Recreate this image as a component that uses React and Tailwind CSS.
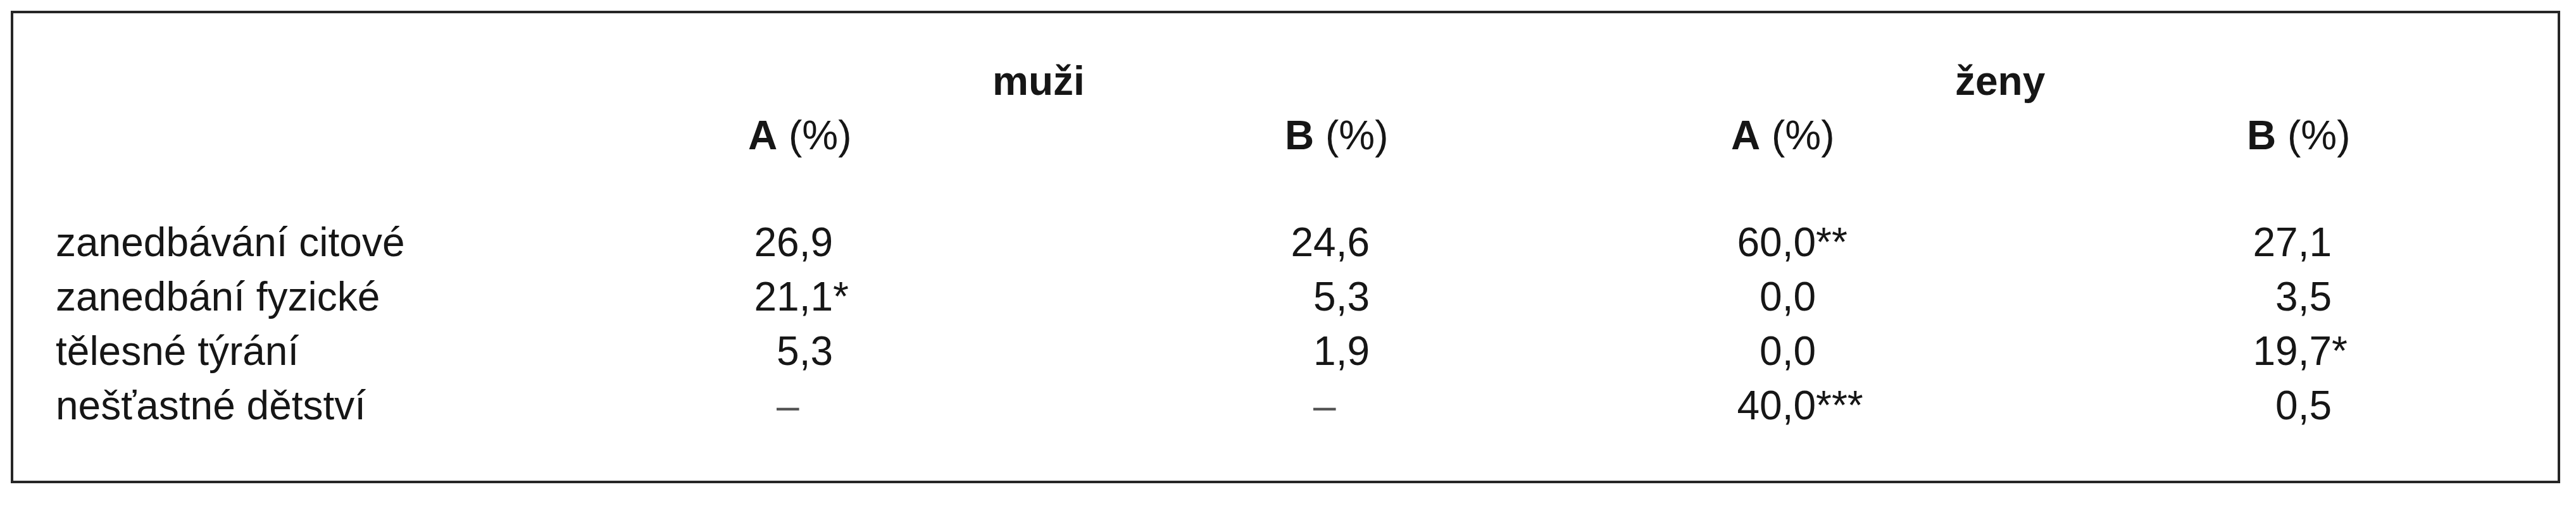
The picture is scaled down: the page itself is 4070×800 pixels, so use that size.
import React from 'react';

const rows = [
  { label: 'zanedbávání citové', values: [['26,9', ''], ['24,6', ''], ['60,0', '**'], ['27,1', '']] },
  { label: 'zanedbání fyzické', values: [['21,1', '*'], ['5,3', ''], ['0,0', ''], ['3,5', '']] },
  { label: 'tělesné týrání', values: [['5,3', ''], ['1,9', ''], ['0,0', ''], ['19,7', '*']] },
  { label: 'nešťastné dětství', values: [['–', ''], ['–', ''], ['40,0', '***'], ['0,5', '']] },
];

const grid = 'grid grid-cols-[1094px_848px_705px_815px_1fr]';

function Cell({ value, mark }) {
  return (
    <div className="flex">
      <span className="w-[134px] text-right shrink-0">
        {value === '–' ? (
          <>
            <span className="text-[#555]">–</span>
            <span className="invisible">,0</span>
          </>
        ) : (
          value
        )}
      </span>
      <span>{mark}</span>
    </div>
  );
}

function ColHead({ letter }) {
  return (
    <div>
      <span className="font-bold">{letter}</span> (%)
    </div>
  );
}

export default function App() {
  return (
    <div className="bg-white w-[4070px] h-[800px] pt-[17px] pl-[17px] font-['Liberation_Sans',Arial,sans-serif] text-[64px] leading-[86px] text-[#161616]">
      <div className="w-[4028px] h-[747px] border-[4px] border-[#262626] pt-[64px] pl-[67px]">
        {/* Group headings */}
        <div className={grid}>
          <div />
          <div className="col-span-2 pl-[386px] font-bold">muži</div>
          <div className="col-span-2 pl-[354px] font-bold">ženy</div>
        </div>

        {/* Column headings */}
        <div className={`${grid} mb-[83px]`}>
          <div />
          <ColHead letter="A" />
          <ColHead letter="B" />
          <ColHead letter="A" />
          <ColHead letter="B" />
        </div>

        {/* Rows */}
        {rows.map((row) => (
          <div key={row.label} className={grid}>
            <div>{row.label}</div>
            {row.values.map(([v, m], i) => (
              <Cell key={i} value={v} mark={m} />
            ))}
          </div>
        ))}
      </div>
    </div>
  );
}
